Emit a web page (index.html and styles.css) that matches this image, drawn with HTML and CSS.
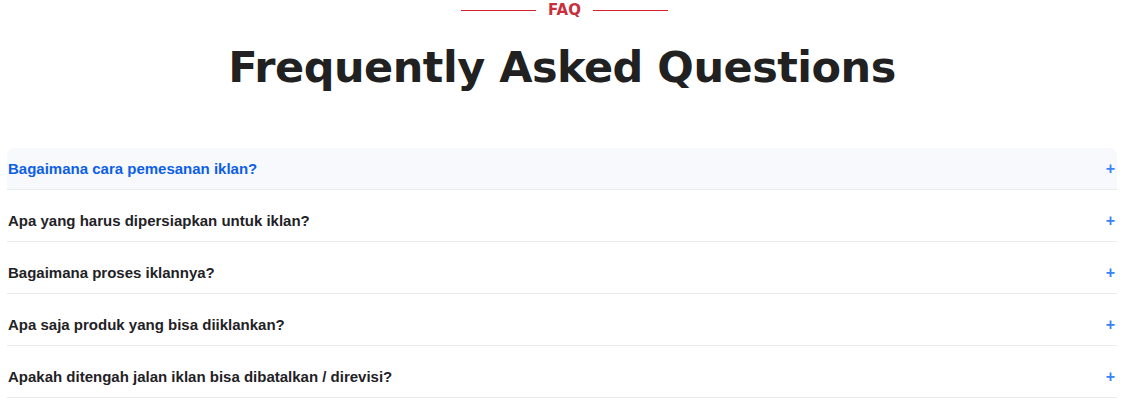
FILE: index.html
```html
<!DOCTYPE html>
<html lang="id">
<head>
<meta charset="utf-8">
<title>FAQ</title>
<link rel="stylesheet" href="styles.css">
</head>
<body>
<section class="faq">
  <div class="eyebrow"><span class="rule"></span><span class="eyebrow-text">FAQ</span><span class="rule"></span></div>
  <h1 class="title">Frequently Asked Questions</h1>
  <div class="accordion">
    <div class="item active"><button class="q"><span>Bagaimana cara pemesanan iklan?</span><span class="plus">+</span></button></div>
    <div class="item"><button class="q"><span>Apa yang harus dipersiapkan untuk iklan?</span><span class="plus">+</span></button></div>
    <div class="item"><button class="q"><span>Bagaimana proses iklannya?</span><span class="plus">+</span></button></div>
    <div class="item"><button class="q"><span>Apa saja produk yang bisa diiklankan?</span><span class="plus">+</span></button></div>
    <div class="item"><button class="q"><span>Apakah ditengah jalan iklan bisa dibatalkan / direvisi?</span><span class="plus">+</span></button></div>
  </div>
</section>
</body>
</html>
```
FILE: styles.css
```css
html, body { margin: 0; padding: 0; background: #fff; }
body { font-family: "Liberation Sans", Arial, sans-serif; color: #212529; }
.faq { padding: 0 12px 0 7px; }
.eyebrow { display: flex; justify-content: center; align-items: center; gap: 10px; height: 20px; margin-top: 0; padding-left: 5px; }
.rule { display: block; width: 75px; height: 1px; background: #d3232f; }
.eyebrow-text { font-family: "DejaVu Sans", sans-serif; font-weight: 700; font-size: 15px; color: #c8303e; line-height: 20px; padding: 0 2px; }
.title { margin: 19px 0 0; text-align: center; font-family: "DejaVu Sans", sans-serif; font-weight: 700; font-size: 43px; line-height: 56px; color: #212121; letter-spacing: -0.5px; }
.accordion { margin-top: 53px; }
.item { margin-top: 10px; border-bottom: 1px solid #e9ecef; }
.item:first-child { margin-top: 0; }
.q { display: flex; width: 100%; justify-content: space-between; align-items: center; height: 41px; padding: 0 2px 0 1px; border: 0; background: transparent; font-family: "Liberation Sans", Arial, sans-serif; font-weight: 700; font-size: 15px; color: #1f2226; text-align: left; }
.active .q { background: #f8f9fd; color: #0d5fe6; border-radius: 8px 8px 0 0; }
.plus { color: #3b82f6; font-size: 16px; font-weight: 700; }
```
